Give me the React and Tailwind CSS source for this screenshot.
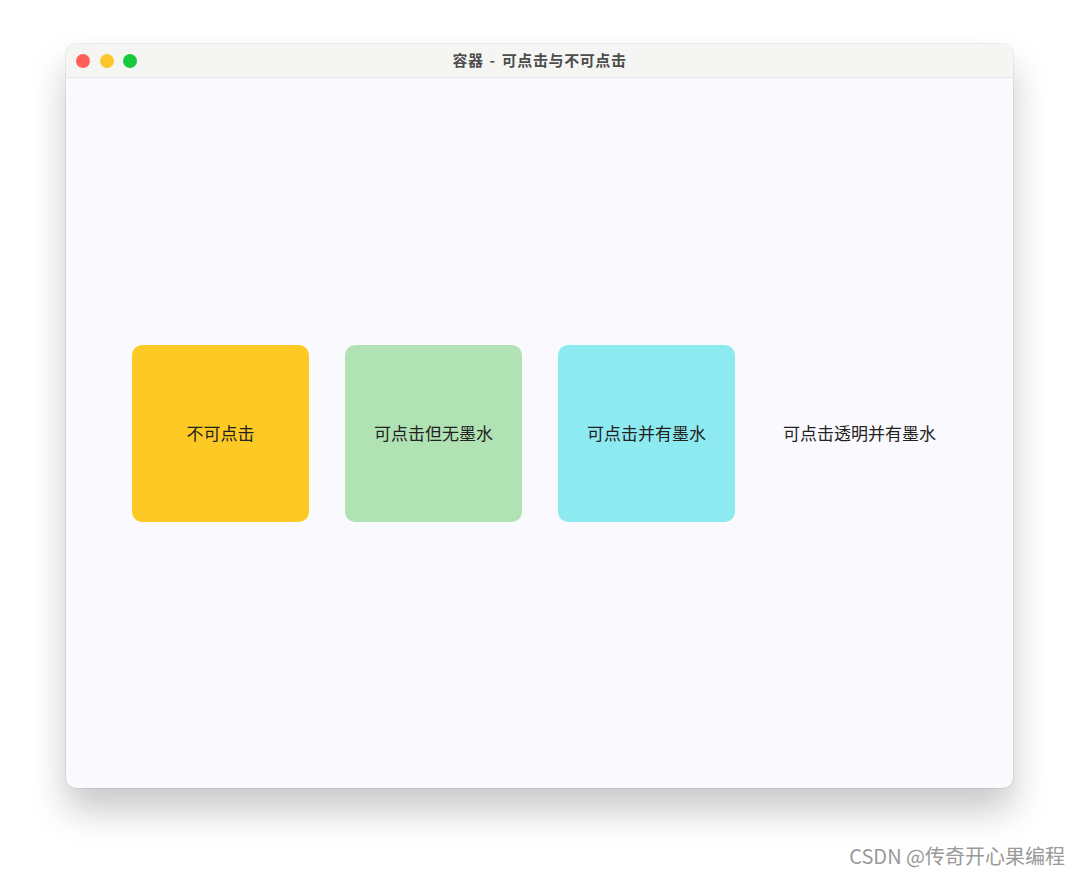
import React from "react";

const font = { fontFamily: '"Noto Sans CJK SC", "Noto Sans", sans-serif' };

export default function App() {
  const boxes = [
    { label: "不可点击", cls: "bg-[#fdca25]" },
    { label: "可点击但无墨水", cls: "bg-[#b1e2b3]" },
    { label: "可点击并有墨水", cls: "bg-[#8eeaf1]" },
    { label: "可点击透明并有墨水", cls: "bg-transparent" },
  ];
  return (
    <div
      className="relative w-[1080px] h-[876px] bg-white overflow-hidden pt-[44px] pl-[66px]"
      style={font}
    >
      <div className="w-[947px] h-[744px] rounded-[10px] bg-[#fafafe] flex flex-col overflow-hidden shadow-[0_0_0_1px_rgba(0,0,0,0.06),0_22px_36px_rgba(0,0,0,0.22)]">
        <div className="relative h-[34px] shrink-0 bg-[#f5f5f3] border-b border-[#e6e6e6] flex items-center">
          <div className="flex items-center gap-[9.5px] pl-[10px]">
            <span className="w-[14px] h-[14px] rounded-full bg-[#fe6057]" />
            <span className="w-[14px] h-[14px] rounded-full bg-[#fec62e]" />
            <span className="w-[14px] h-[14px] rounded-full bg-[#18c93e]" />
          </div>
          <div className="absolute inset-0 flex items-center justify-center text-[15px] font-bold text-[#4d4d4d] tracking-[0.6px] [word-spacing:2px] pointer-events-none">
            容器 - 可点击与不可点击
          </div>
        </div>
        <div className="flex-1 flex items-center pl-[66px] gap-[36px]">
          {boxes.map((b) => (
            <div
              key={b.label}
              className={`w-[177px] h-[177px] rounded-[10px] flex items-center justify-center text-[17px] text-[#222222] ${b.cls}`}
            >
              {b.label}
            </div>
          ))}
        </div>
      </div>
      <div className="absolute right-[15px] bottom-[5px] text-[20px] text-[#999999]">
        CSDN @传奇开心果编程
      </div>
    </div>
  );
}
